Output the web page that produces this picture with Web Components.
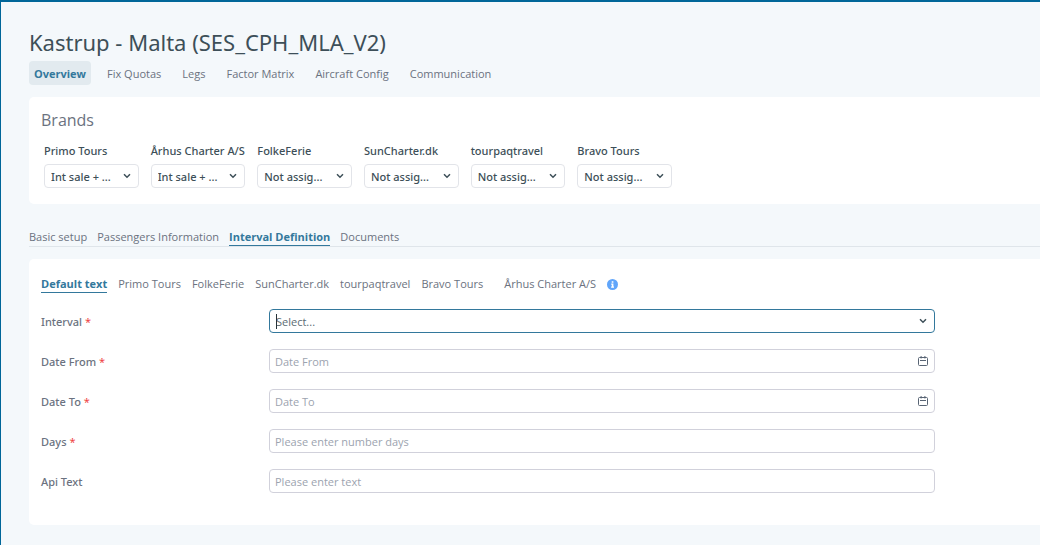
<!DOCTYPE html>
<html lang="en">
<head>
<meta charset="utf-8">
<meta name="viewport" content="width=device-width, initial-scale=1">
<title>Kastrup - Malta</title>
<style>
  html, body { margin: 0; }
  body {
    --accent: #33789c;
    --ink: #3d4f58;
    --muted: #6b7280;
    --medium: "Noto Sans", "Open Sans", sans-serif;
    font: 11px/16px "Open Sans", "Noto Sans", sans-serif;
    color: var(--muted);
    background: #f4f8fb;
  }
</style>
</head>
<body>
<route-page></route-page>

<script>
const define = (name, html, setup) => customElements.define(name, class extends HTMLElement {
  constructor() {
    super();
    const t = document.createElement('template');
    t.innerHTML = html;
    this.attachShadow({ mode: 'open' }).append(t.content.cloneNode(true));
  }
  connectedCallback() { if (setup) setup(this, this.shadowRoot); }
});

const chevron = `<svg viewBox="0 0 10 10" width="10" height="10" aria-hidden="true"><path d="M2 3.2 5 6.2 8 3.2" fill="none" stroke="#3d4f58" stroke-width="1.5"/></svg>`;

/* One navigation link; variant decides pill or underline look */
define('tab-link', `
  <style>
    :host { display: block; }
    a { display: block; color: inherit; text-decoration: none; white-space: nowrap; }
    :host([variant="pill"]) a { padding: 5px 5px 3px; border-radius: 4px; }
    :host([variant="pill"][current]) a { background: #e2eaef; }
    :host([variant="line"]) a { border-bottom: 1px solid transparent; }
    :host([variant="line"][current]) a { border-color: var(--accent); }
    :host([current]) a { color: var(--accent); font-weight: 700; }
  </style>
  <a href="#"><slot></slot></a>
`, (host, root) => { if (host.hasAttribute('current')) root.querySelector('a').setAttribute('aria-current', 'page'); });

define('tab-bar', `
  <style>
    :host { display: block; }
    nav { display: flex; align-items: center; gap: var(--tab-gap, 11px); }
  </style>
  <nav><slot></slot></nav>
`);

define('content-card', `
  <style>
    :host { display: block; background: #fff; border-radius: 5px 0 0 5px; padding: 12px; }
  </style>
  <slot></slot>
`);

define('brand-select', `
  <style>
    :host { display: block; color: var(--ink); font-family: var(--medium); font-weight: 500; }
    label { display: block; white-space: nowrap; }
    .box { display: grid; align-items: center; margin-top: 5px; }
    select, svg { grid-area: 1 / 1; }
    select {
      appearance: none; box-sizing: border-box; width: 100%; height: 24px; margin: 0;
      padding: 2px 22px 0 6px; border: 1px solid #e2e4e9; border-radius: 4px;
      background: #fff; color: inherit; font: inherit;
    }
    svg { justify-self: end; margin-right: 7px; pointer-events: none; }
  </style>
  <label for="s"></label>
  <div class="box"><select id="s"><option></option></select>${chevron}</div>
`, (host, root) => {
  root.querySelector('label').textContent = host.getAttribute('label');
  root.querySelector('option').textContent = host.getAttribute('value');
});

define('form-row', `
  <style>
    :host { display: grid; grid-template-columns: 228px minmax(0, 1fr); align-items: center; }
    label { font-family: var(--medium); font-weight: 500; padding-top: 2px; }
    .req { color: #ef4444; font-weight: 400; }
    .box { display: grid; align-items: center; position: relative; }
    .box > * { grid-area: 1 / 1; }
    input, select {
      appearance: none; box-sizing: border-box; width: 100%; height: 24px; margin: 0;
      padding: 1px 5px 0; border: 1px solid #d1d1db; border-radius: 4px;
      background: #fff; color: #5b6b73; font: inherit; outline: none;
    }
    select { border-color: var(--accent); padding-left: 6px; }
    input::placeholder { color: #9ca3af; opacity: 1; }
    svg { justify-self: end; margin-right: 7px; pointer-events: none; }
    .caret { position: absolute; left: 7px; top: 5px; width: 1px; height: 15px; background: #263238; }
  </style>
  <label for="f"></label>
  <div class="box"></div>
`, (host, root) => {
  const label = root.querySelector('label');
  label.textContent = host.getAttribute('label');
  if (host.hasAttribute('required')) label.insertAdjacentHTML('beforeend', ' <span class="req">*</span>');
  const kind = host.getAttribute('kind');
  const hint = host.getAttribute('hint');
  const calendar = `<svg viewBox="0 0 10 10" width="10" height="10" aria-hidden="true"><path d="M1.5 1.5h7a1 1 0 0 1 1 1v6a1 1 0 0 1-1 1h-7a1 1 0 0 1-1-1v-6a1 1 0 0 1 1-1zM2 4.5h6M3.1 0v2.5M6.9 0v2.5" fill="none" stroke="#586474"/></svg>`;
  root.querySelector('.box').innerHTML = kind === 'select'
    ? `<select id="f"><option>${hint}</option></select><span class="caret"></span>${chevron}`
    : `<input id="f" type="text" placeholder="${hint}">${kind === 'date' ? calendar : ''}`;
});

define('info-mark', `
  <style>:host { display: block; } svg { display: block; }</style>
  <svg viewBox="0 0 11 11" width="11" height="11" role="img" aria-label="Info"><circle cx="5.5" cy="5.5" r="5.5" fill="#60a5fa"/><path d="M4.7 2.2h1.7v1.5H4.7zM4.2 4.6h2.2v3h.6v1.1H4.1V7.6h.7V5.7h-.6z" fill="#fff"/></svg>
`);

define('route-page', `
  <style>
    :host {
      display: block; box-sizing: border-box; min-height: 100vh;
      border-top: 2px solid #006699; border-left: 1px solid #006699; padding: 24px 0 20px 28px;
    }
    h1 { margin: 0; font: 400 22px/32px var(--medium); color: var(--ink); }
    h2 { margin: 0; font-size: 16px; line-height: 22px; font-weight: 400; }
    .views { margin: 3px 0 12px; }
    .brands { display: grid; grid-template-columns: repeat(6, minmax(0, 1fr)); gap: 12px; max-width: 628px; margin: 12px 3px 4px; }
    .sections { --tab-gap: 10px; margin: 25px 0 12px; border-bottom: 1px solid #dfe5ea; }
    .texts { margin: 5px 0 16px; }
    .apart { margin-left: 10px; }
    form { display: grid; gap: 16px; padding: 0 93px 20px 0; }
  </style>
  <h1>Kastrup - Malta (SES_CPH_MLA_V2)</h1>
  <tab-bar class="views">
    <tab-link variant="pill" current>Overview</tab-link>
    <tab-link variant="pill">Fix Quotas</tab-link>
    <tab-link variant="pill">Legs</tab-link>
    <tab-link variant="pill">Factor Matrix</tab-link>
    <tab-link variant="pill">Aircraft Config</tab-link>
    <tab-link variant="pill">Communication</tab-link>
  </tab-bar>
  <content-card>
    <h2>Brands</h2>
    <div class="brands">
      <brand-select label="Primo Tours" value="Int sale + ..."></brand-select>
      <brand-select label="Århus Charter A/S" value="Int sale + ..."></brand-select>
      <brand-select label="FolkeFerie" value="Not assig..."></brand-select>
      <brand-select label="SunCharter.dk" value="Not assig..."></brand-select>
      <brand-select label="tourpaqtravel" value="Not assig..."></brand-select>
      <brand-select label="Bravo Tours" value="Not assig..."></brand-select>
    </div>
  </content-card>
  <tab-bar class="sections">
    <tab-link variant="line">Basic setup</tab-link>
    <tab-link variant="line">Passengers Information</tab-link>
    <tab-link variant="line" current>Interval Definition</tab-link>
    <tab-link variant="line">Documents</tab-link>
  </tab-bar>
  <content-card>
    <tab-bar class="texts">
      <tab-link variant="line" current>Default text</tab-link>
      <tab-link variant="line">Primo Tours</tab-link>
      <tab-link variant="line">FolkeFerie</tab-link>
      <tab-link variant="line">SunCharter.dk</tab-link>
      <tab-link variant="line">tourpaqtravel</tab-link>
      <tab-link variant="line">Bravo Tours</tab-link>
      <tab-link variant="line" class="apart">Århus Charter A/S</tab-link>
      <info-mark></info-mark>
    </tab-bar>
    <form>
      <form-row kind="select" label="Interval" hint="Select..." required></form-row>
      <form-row kind="date" label="Date From" hint="Date From" required></form-row>
      <form-row kind="date" label="Date To" hint="Date To" required></form-row>
      <form-row kind="text" label="Days" hint="Please enter number days" required></form-row>
      <form-row kind="text" label="Api Text" hint="Please enter text"></form-row>
    </form>
  </content-card>
`);
</script>
</body>
</html>
